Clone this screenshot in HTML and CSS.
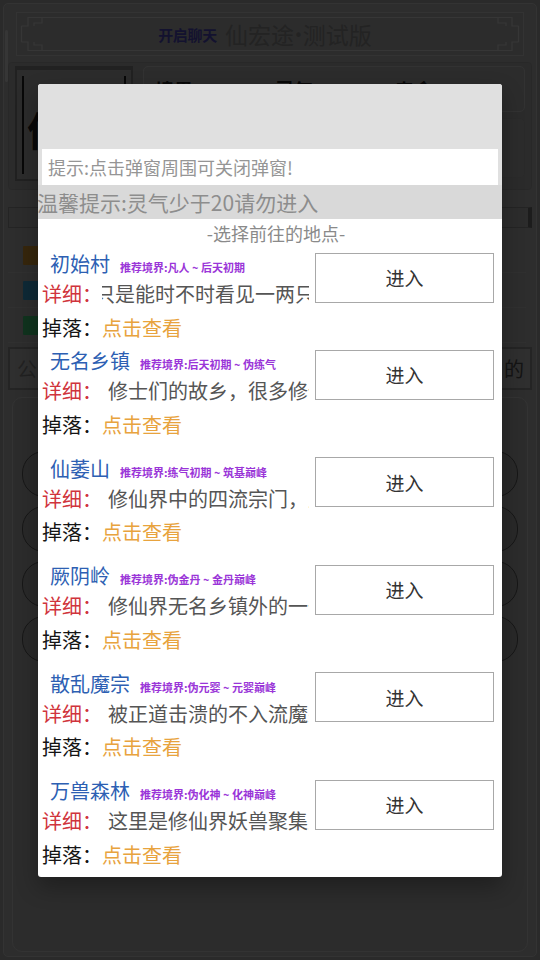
FILE: index.html
```html
<!DOCTYPE html>
<html lang="zh">
<head>
<meta charset="utf-8">
<title>仙宏途·测试版</title>
<link rel="stylesheet" href="styles.css">
</head>
<body>
<div class="page">
  <div class="scroll-thumb"></div>
  <div class="frame">
    <header class="title-box">
      <svg class="title-deco" width="508" height="44" viewBox="0 0 508 44" aria-hidden="true">
        <g fill="none" stroke="#ffffff" stroke-width="1.2">
          <path d="M26 5.5 H482 M26 38.5 H482 M5.5 14 V30 M502.5 14 V30"/>
          <path d="M5.5 14 H12 V5.5 H26 V11 H18 V14"/>
          <path d="M502.5 14 H496 V5.5 H482 V11 H490 V14"/>
          <path d="M5.5 30 H12 V38.5 H26 V33 H18 V30"/>
          <path d="M502.5 30 H496 V38.5 H482 V33 H490 V30"/>
        </g>
      </svg>
      <span class="chat-link">开启聊天</span>
      <span class="game-title">仙宏途<span class="dot">•</span>测试版</span>
    </header>

    <section class="profile">
      <div class="avatar"><span class="avatar-char">仙</span></div>
      <div class="profile-info">
        <div class="stats">
          <span class="stat">境界</span>
          <span class="stat">灵气</span>
          <span class="stat">寿命</span>
        </div>
        <div class="stats stats-low"></div>
      </div>
    </section>

    <div class="bar"></div>

    <div class="badges">
      <div class="badge-row"><span class="sq sq-orange"></span></div>
      <div class="badge-row"><span class="sq sq-blue"></span></div>
      <div class="badge-row"><span class="sq sq-green"></span></div>
    </div>

    <div class="notice"><span>公</span><span class="notice-end">的</span></div>

    <section class="main-panel">
      <div class="pill"></div><div class="pill"></div><div class="pill"></div>
      <div class="pill"></div><div class="pill"></div><div class="pill"></div>
      <div class="pill"></div><div class="pill"></div><div class="pill"></div>
      <div class="pill"></div><div class="pill"></div><div class="pill"></div>
    </section>
  </div>

  <div class="backdrop"></div>

  <div class="modal">
    <div class="modal-head">
      <div class="modal-top"></div>
      <div class="hint">提示:点击弹窗周围可关闭弹窗!</div>
      <div class="warn">温馨提示:灵气少于20请勿进入</div>
    </div>
    <div class="modal-title">-选择前往的地点-</div>
    <div class="places">
      <div class="place">
        <div class="place-info">
          <div class="name-line"><span class="pname">初始村</span><span class="tag">推荐境界:凡人 ~ 后天初期</span></div>
          <div class="detail-line"><span class="lbl-red">详细：</span><div class="clip"><span class="txt shift">只是能时不时看见一两只</span></div></div>
          <div class="drop-line"><span class="lbl">掉落：</span><span class="link">点击查看</span></div>
        </div>
        <div class="enter">进入</div>
      </div>
      <div class="place">
        <div class="place-info">
          <div class="name-line"><span class="pname">无名乡镇</span><span class="tag">推荐境界:后天初期 ~ 伪练气</span></div>
          <div class="detail-line"><span class="lbl-red">详细：</span><div class="clip"><span class="txt">修士们的故乡，很多修仙</span></div></div>
          <div class="drop-line"><span class="lbl">掉落：</span><span class="link">点击查看</span></div>
        </div>
        <div class="enter">进入</div>
      </div>
      <div class="place">
        <div class="place-info">
          <div class="name-line"><span class="pname">仙萎山</span><span class="tag">推荐境界:练气初期 ~ 筑基巅峰</span></div>
          <div class="detail-line"><span class="lbl-red">详细：</span><div class="clip"><span class="txt">修仙界中的四流宗门，虽</span></div></div>
          <div class="drop-line"><span class="lbl">掉落：</span><span class="link">点击查看</span></div>
        </div>
        <div class="enter">进入</div>
      </div>
      <div class="place">
        <div class="place-info">
          <div class="name-line"><span class="pname">厥阴岭</span><span class="tag">推荐境界:伪金丹 ~ 金丹巅峰</span></div>
          <div class="detail-line"><span class="lbl-red">详细：</span><div class="clip"><span class="txt">修仙界无名乡镇外的一条</span></div></div>
          <div class="drop-line"><span class="lbl">掉落：</span><span class="link">点击查看</span></div>
        </div>
        <div class="enter">进入</div>
      </div>
      <div class="place">
        <div class="place-info">
          <div class="name-line"><span class="pname">散乱魔宗</span><span class="tag">推荐境界:伪元婴 ~ 元婴巅峰</span></div>
          <div class="detail-line"><span class="lbl-red">详细：</span><div class="clip"><span class="txt">被正道击溃的不入流魔宗</span></div></div>
          <div class="drop-line"><span class="lbl">掉落：</span><span class="link">点击查看</span></div>
        </div>
        <div class="enter">进入</div>
      </div>
      <div class="place">
        <div class="place-info">
          <div class="name-line"><span class="pname">万兽森林</span><span class="tag">推荐境界:伪化神 ~ 化神巅峰</span></div>
          <div class="detail-line"><span class="lbl-red">详细：</span><div class="clip"><span class="txt">这里是修仙界妖兽聚集之</span></div></div>
          <div class="drop-line"><span class="lbl">掉落：</span><span class="link">点击查看</span></div>
        </div>
        <div class="enter">进入</div>
      </div>
    </div>
  </div>
</div>
</body>
</html>
```
FILE: styles.css
```css
* { box-sizing: border-box; }

html, body {
  margin: 0;
  width: 540px;
  height: 960px;
  overflow: hidden;
  background: #c4c4c4;
  font-family: "Noto Sans CJK SC", "Noto Sans", sans-serif;
}

.page {
  position: relative;
  width: 540px;
  height: 960px;
  padding: 3px;
}

.scroll-thumb {
  position: absolute;
  left: 5px;
  top: 30px;
  width: 3px;
  height: 52px;
  border-radius: 2px;
  background: #ffffff;
}

.frame {
  height: 954px;
  border: 1px solid #eeeeee;
  border-radius: 5px;
  background: #d3d3d3;
  padding: 0 4px;
  display: flex;
  flex-direction: column;
}

/* title */
.title-box {
  position: relative;
  margin: 8px 8px 0;
  height: 44px;
  border: 1px solid #f0f0f0;
  background: #cfcfcf;
  display: flex;
  align-items: center;
  justify-content: center;
  gap: 8px;
  padding-right: 10px;
}
.title-deco { position: absolute; left: -1px; top: -1px; }
.chat-link {
  position: relative;
  font-size: 15px;
  font-weight: 700;
  color: #5d57dc;
  letter-spacing: -0.3px;
}
.game-title {
  position: relative;
  font-size: 23px;
  color: #a4a4a4;
}
.dot {
  font-family: "DejaVu Sans", sans-serif;
  font-size: 15px;
  vertical-align: 3px;
}

/* profile */
.profile {
  margin-top: 6px;
  height: 128px;
  border: 1px solid #bdbdbd;
  border-radius: 4px;
  background: #cccccc;
  display: flex;
  gap: 10px;
  padding: 3px 6px 0 6px;
}
.avatar {
  position: relative;
  width: 118px;
  height: 115px;
  border: 2px solid #9e9e9e;
  border-top-width: 4px;
  background: #d1d1d1;
}
.avatar::before {
  content: "";
  position: absolute;
  left: 5px;
  top: 6px;
  width: 2px;
  height: 98px;
  background: #262626;
}
.avatar::after {
  content: "";
  position: absolute;
  right: 5px;
  top: 6px;
  width: 2px;
  height: 26px;
  background: #262626;
}
.avatar-char {
  position: absolute;
  left: 10px;
  top: 30px;
  font-size: 40px;
  font-weight: 700;
  color: #262626;
}
.profile-info {
  flex: 1;
  display: flex;
  flex-direction: column;
  gap: 6px;
}
.stats {
  height: 46px;
  border: 1px solid #ececec;
  border-radius: 5px;
  background: #d1d1d1;
  display: flex;
  align-items: center;
  padding-left: 11px;
}
.stats-low {
  height: 60px;
  border-color: #c8c8c8;
}
.stat {
  width: 120px;
  font-size: 19px;
  font-weight: 700;
  color: #262626;
}

/* bar */
.bar {
  margin-top: 17px;
  height: 21px;
  border: 1px solid #ababab;
  background: #cfcfcf;
  border-right: 4px solid #838383;
}

/* badges */
.badges {
  margin-top: 10px;
  display: flex;
  flex-direction: column;
}
.badge-row {
  height: 35px;
  display: flex;
  align-items: center;
  padding-left: 15px;
  border-bottom: 1px solid #e3e3e3;
  margin-right: 6px;
}
.sq {
  width: 16px;
  height: 19px;
  border-radius: 1px;
}
.sq-orange { background: #ffb23a; }
.sq-blue { background: #45c3ff; }
.sq-green { background: #4bf08c; }

.notice {
  margin-top: 4px;
  height: 43px;
  border: 2px solid #a9a9a9;
  background: #dedede;
  display: flex;
  align-items: center;
  justify-content: space-between;
  padding: 0 6px 0 7px;
  font-size: 20px;
  color: #9e9e9e;
}
.notice-end { color: #5e5e5e; }

/* main panel */
.main-panel {
  margin: 7px 4px 0;
  height: 555px;
  border: 1px solid #eeeeee;
  border-radius: 10px;
  background: #cfcfcf;
  display: grid;
  grid-template-columns: repeat(3, 1fr);
  grid-auto-rows: 46px;
  gap: 9px 14px;
  padding: 53px 9px 0 9px;
  align-content: start;
}
.pill {
  border: 1.5px solid #696969;
  border-radius: 22px;
  background: #c2c2c2;
}

/* backdrop + modal */
.backdrop {
  position: absolute;
  inset: 0;
  background: rgba(0, 0, 0, 0.79);
}

.modal {
  position: absolute;
  left: 38px;
  top: 84px;
  width: 464px;
  height: 793px;
  overflow: hidden;
  background: #fff;
  border-radius: 3px;
  box-shadow: 0 10px 22px rgba(0, 0, 0, 0.3);
}
.modal-head {
  background: #e0e0e0;
}
.modal-top { height: 65px; }
.hint {
  margin: 0 4px;
  height: 36px;
  background: #fff;
  padding-left: 6px;
  font-size: 18px;
  line-height: 36px;
  color: #959595;
  white-space: nowrap;
}
.warn {
  height: 34px;
  background: #d9d9d9;
  font-size: 21px;
  line-height: 34px;
  color: #8d8d8d;
  margin-left: -1px;
  white-space: nowrap;
}
.modal-title {
  height: 30px;
  line-height: 28px;
  text-align: center;
  font-size: 18px;
  color: #8a8a8a;
  padding-left: 12px;
}

.places {
  padding: 0 8px 0 4px;
}
.place {
  display: flex;
  gap: 6px;
  height: 97px;
}
.place:nth-child(n+3) { margin-top: 10.5px; }

.place-info {
  width: 267px;
  overflow: hidden;
  display: flex;
  flex-direction: column;
}
.name-line {
  height: 30px;
  line-height: 30px;
  padding-left: 8px;
  white-space: nowrap;
}
.pname {
  font-size: 20px;
  color: #2d5fb3;
}
.tag {
  margin-left: 10px;
  font-size: 11px;
  font-weight: 700;
  color: #9a35d8;
}
.detail-line {
  height: 29px;
  display: flex;
  align-items: center;
  font-size: 20px;
}
.lbl-red {
  width: 60px;
  flex: none;
  color: #d0343c;
}
.clip {
  flex: 1;
  overflow: hidden;
  white-space: nowrap;
  color: #555;
}
.txt { display: inline-block; padding-left: 6px; }
.txt.shift { padding-left: 0; margin-left: -7px; }

.drop-line {
  height: 38px;
  display: flex;
  align-items: center;
  font-size: 20px;
}
.lbl { width: 60px; flex: none; color: #151515; }
.link { color: #e8a33e; }

.enter {
  margin-top: 3.5px;
  width: 179px;
  height: 50px;
  border: 1px solid #a8a8a8;
  background: #fff;
  display: flex;
  align-items: center;
  justify-content: center;
  font-size: 19px;
  color: #333;
}
```
